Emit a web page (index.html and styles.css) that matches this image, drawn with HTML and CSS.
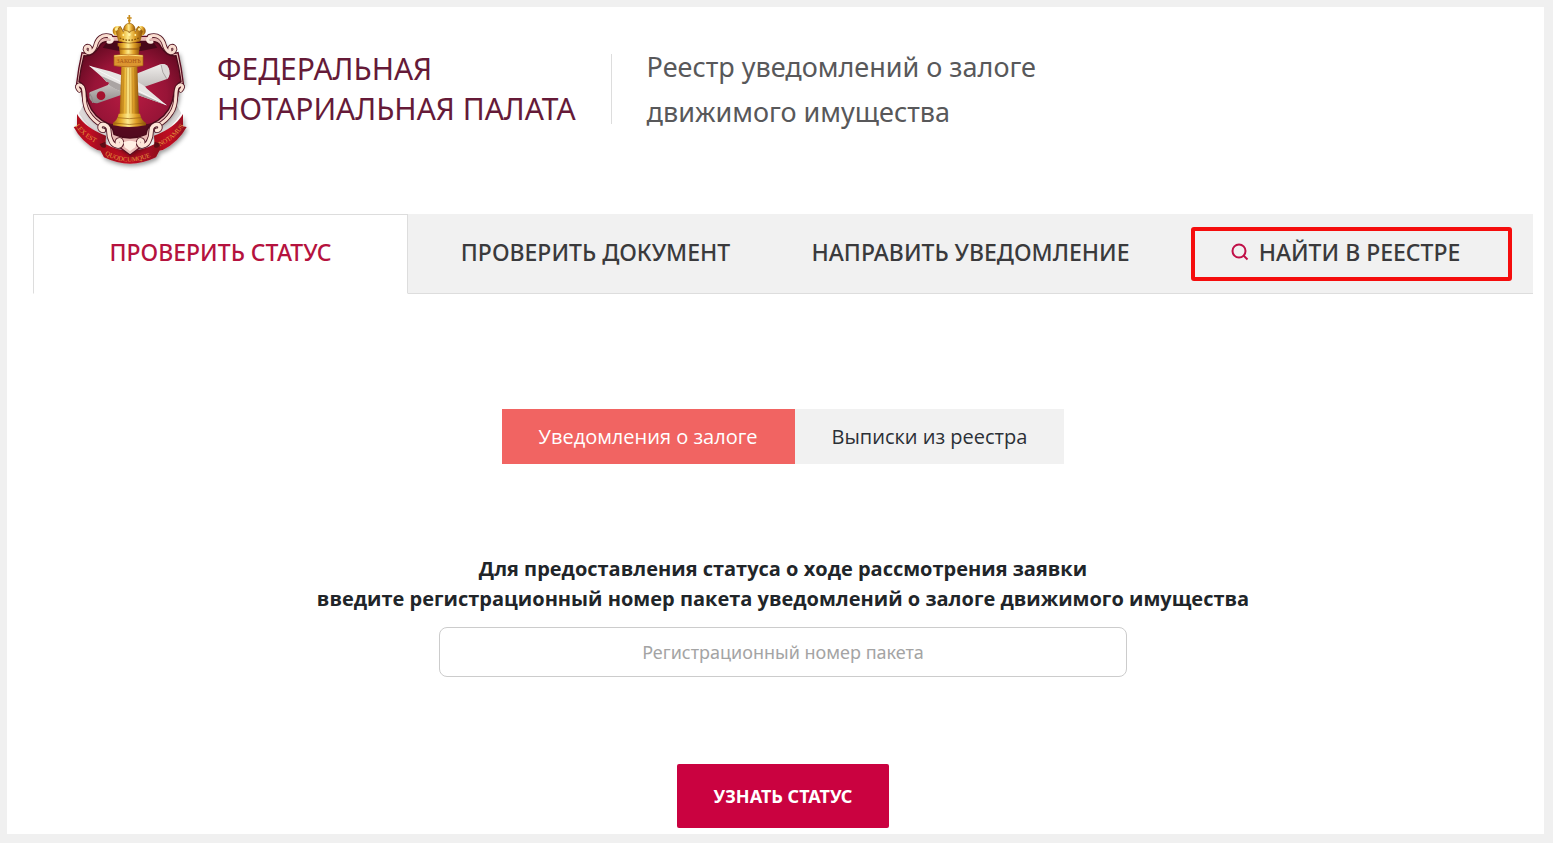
FILE: index.html
```html
<!DOCTYPE html>
<html lang="ru">
  <head>
    <meta charset="UTF-8" />
    <meta name="viewport" content="width=device-width, initial-scale=1.0" />
    <title>Реестр уведомлений о залоге движимого имущества</title>
    <link rel="stylesheet" href="styles.css">
  </head>
  <body>
    <div class="page">
      <header class="header">
        <svg class="emblem" viewBox="30 21 360 480" aria-hidden="true">
          <defs>
            <linearGradient id="gold" x1="0" x2="1" y1="0" y2="0">
              <stop offset="0" stop-color="#a8660c" />
              <stop offset="0.25" stop-color="#e9b233" />
              <stop offset="0.45" stop-color="#fdea8c" />
              <stop offset="0.7" stop-color="#e0a028" />
              <stop offset="1" stop-color="#8a4f08" />
            </linearGradient>
            <radialGradient id="shield" cx="0.5" cy="0.55" r="0.6">
              <stop offset="0" stop-color="#b81b42" />
              <stop offset="0.6" stop-color="#981437" />
              <stop offset="1" stop-color="#650a22" />
            </radialGradient>
            <linearGradient id="ribbon" x1="0" x2="1" y1="0" y2="0">
              <stop offset="0" stop-color="#a80c1a" />
              <stop offset="0.5" stop-color="#c01024" />
              <stop offset="1" stop-color="#8e101e" />
            </linearGradient>
            <linearGradient id="paper" x1="0" x2="0" y1="0" y2="1">
              <stop offset="0" stop-color="#f0eeec" />
              <stop offset="0.5" stop-color="#c8c4c2" />
              <stop offset="1" stop-color="#8f8a8a" />
            </linearGradient>
            <filter id="shadow" x="-10%" y="-10%" width="125%" height="125%">
              <feDropShadow dx="4" dy="7" stdDeviation="6" flood-color="#000" flood-opacity="0.4" />
            </filter>
            <path id="motto-left" d="M46 362 Q68 398 120 420" />
            <path id="motto-mid" d="M134 449 Q210 492 290 446" />
            <path id="motto-right" d="M299 424 Q350 402 378 352" />
          </defs>

          <!-- ribbon -->
          <path d="M56 325 Q90 378 138 402 Q210 450 282 402 Q330 378 364 325 L350 300 H70 Z" fill="#dedada" />
          <g filter="url(#shadow)">
            <path d="M51 327 Q75 369 138 392 L136 426 Q130 440 112 435 Q65 412 41 366 L51 364 Z" fill="url(#ribbon)" />
            <path d="M369 327 Q345 369 282 392 L284 426 Q290 440 308 435 Q355 412 380 366 L369 364 Z" fill="url(#ribbon)" />
            <path d="M119 417 Q124 407 136 417 Q210 457 284 417 Q296 407 301 417 L299 436 L288 457 Q210 495 132 457 L121 436 Z" fill="url(#ribbon)" />
            <path d="M119 417 Q126 434 138 426 L136 410 Z M301 417 Q294 434 282 426 L284 410 Z" fill="#5d0713" />
          </g>
          <g class="motto">
            <text><textPath href="#motto-left">LEX EST</textPath></text>
            <text><textPath href="#motto-mid">QUODCUMQUE</textPath></text>
            <text><textPath href="#motto-right">NOTAMUS</textPath></text>
          </g>

          <!-- shield -->
          <g filter="url(#shadow)">
            <path d="M150 94 Q112 91 104 124 Q88 150 66 143 Q55 190 50 236 Q66 240 66 266 Q72 325 121 357 Q146 365 148 388 L166 417 L210 450 L254 417 L272 388 Q274 365 299 357 Q348 325 354 266 Q354 240 370 236 Q365 190 354 143 Q332 150 316 124 Q308 91 270 94 Z" fill="#e8b9b4" stroke="#5b0f20" stroke-width="4" />
          </g>
          <path d="M150 109 Q124 108 118 124 Q99 156 72 152 Q62 190 57 230 Q76 240 78 266 Q86 320 126 346 Q160 360 162 388 Q210 410 258 388 Q260 360 294 346 Q334 320 342 266 Q344 240 363 230 Q358 190 348 152 Q321 156 302 124 Q296 108 270 109 Z" fill="url(#shield)" stroke="#4a0a1a" stroke-width="4" />
          <path d="M140 112 H280 L292 128 Q210 150 128 128 Z" fill="#3d0716" opacity="0.8" />
          <path d="M134 351 Q210 374 286 351 Q262 370 256 388 Q210 407 164 388 Q157 368 134 351 Z" fill="#45091a" opacity="0.8" />
          <!-- scroll frame curls -->
          <g fill="none" stroke-linecap="round" stroke-linejoin="round">
            <g id="curls">
              <path d="M152 94 C126 86 111 101 106 124 C99 144 80 150 75 133 C76 118 95 122 90 136" stroke="#4f1220" stroke-width="14" />
              <path d="M152 94 C126 86 111 101 106 124 C99 144 80 150 75 133 C76 118 95 122 90 136" stroke="#f9ddd0" stroke-width="9" />
              <path d="M144 111 C160 114 162 97 148 97" stroke="#fbe9dd" stroke-width="9" />
              <path d="M58 256 C44 242 58 234 68 246 C78 264 65 295 86 324 C98 343 111 353 124 360" stroke="#4f1220" stroke-width="14" />
              <path d="M58 256 C44 242 58 234 68 246 C78 264 65 295 86 324 C98 343 111 353 124 360" stroke="#f9ddd0" stroke-width="9" />
              <path d="M130 376 C116 377 116 354 134 359 C154 367 142 384 151 402 C158 427 188 430 184 410 C181 399 168 407 173 414" stroke="#4f1220" stroke-width="16" />
              <path d="M130 376 C116 377 116 354 134 359 C154 367 142 384 151 402 C158 427 188 430 184 410 C181 399 168 407 173 414" stroke="#fde6d8" stroke-width="11" />
            </g>
            <use href="#curls" transform="translate(420 0) scale(-1 1)" />
          </g>
          <path d="M190 412 Q210 402 230 412 L226 427 L210 438 L194 427 Z" fill="#fff0e5" />

          <!-- crossed scroll and quill -->
          <path d="M89 262 L301 178 Q320 174 327 194 Q331 213 321 222 L112 295 Q94 296 88 278 Z" fill="url(#paper)" />
          <path d="M303 178 Q322 172 328 196 Q331 213 322 222 Q310 200 303 178 Z" fill="#dedad8" />
          <path d="M303 179 Q306 204 320 221" fill="none" stroke="#8d8685" stroke-width="2" />
          <path d="M88 264 Q98 276 98 294" fill="none" stroke="#8d8685" stroke-width="3" />
          <circle cx="123" cy="272" r="13" fill="#a5122f" />
          <path d="M87 182 L150 199 Q245 230 261 251 L320 301 L231 269 Q180 265 152 244 L144 238 L151 233 L139 230 L126 216 Z" fill="#e7e4e2" />
          <path d="M126 214 L320 301 L231 269 Q180 265 152 244 L144 238 L151 233 L139 230 Z" fill="#aaa4a3" />
          <path d="M89 183 L319 300" stroke="#fff" stroke-width="2" />

          <!-- column -->
          <path d="M176 116 H240 L236 150 H180 Z" fill="url(#gold)" />
          <path d="M173 114 H243 V124 Q208 134 173 124 Z" fill="url(#gold)" />
          <path d="M177 132 H239" stroke="#8b510c" stroke-width="3" />
          <path d="M184 184 H232 L237 331 H179 Z" fill="url(#gold)" />
          <path d="M192 188 L189 326 M200 188 L198 326 M208 188 V326 M216 188 L218 326 M224 188 L228 326" stroke="#a66d13" stroke-width="2" opacity="0.6" />
          <path d="M176 326 H240 L243 337 Q245 345 258 354 V361 Q208 371 159 361 V354 Q171 345 173 337 Z" fill="url(#gold)" />
          <path d="M173 338 Q208 344 243 338 M161 354 Q208 363 256 354" fill="none" stroke="#925910" stroke-width="2" />
          <path d="M162 151 Q206 145 249 151 V182 Q206 190 162 182 Z" fill="#dc9530" stroke="#a15e14" stroke-width="2" />
          <path d="M163 153 Q206 147 248 153" fill="none" stroke="#ffe07a" stroke-width="3" />
          <text class="column-label" x="206" y="174">ЗАКОНЪ</text>

          <!-- crown -->
          <circle cx="173" cy="78" r="15" fill="url(#gold)" />
          <circle cx="242" cy="78" r="15" fill="url(#gold)" />
          <path d="M168 79 L181 64 L190 82 L195 64 L208 84 L221 64 L226 82 L235 64 L248 79 L240 108 Q208 121 176 108 Z" fill="url(#gold)" stroke="#97600f" stroke-width="2" />
          <path d="M190 74 Q194 55 208 55 Q222 55 226 74 L208 80 Z" fill="url(#gold)" stroke="#97600f" stroke-width="2" />
          <path d="M179 99 Q208 112 237 99" fill="none" stroke="#80510a" stroke-width="4" stroke-dasharray="5 4" />
          <path d="M208 30 V58 M201 39 H215 M204 47 H212" stroke="#c88b1c" stroke-width="5" />
          <g fill="#fff3a6">
            <circle cx="169" cy="73" r="4" />
            <circle cx="238" cy="73" r="4" />
            <circle cx="208" cy="89" r="4" />
            <circle cx="190" cy="90" r="3" />
            <circle cx="226" cy="90" r="3" />
          </g>
        </svg>
        <div class="heading">
          <div class="chamber">ФЕДЕРАЛЬНАЯ<br />НОТАРИАЛЬНАЯ ПАЛАТА</div>
          <h1 class="title">Реестр уведомлений о залоге<br />движимого имущества</h1>
        </div>
      </header>

      <main class="main">
        <nav class="tabs">
          <a class="tab tab-active" href="#">ПРОВЕРИТЬ СТАТУС</a>
          <a class="tab" href="#">ПРОВЕРИТЬ ДОКУМЕНТ</a>
          <a class="tab" href="#">НАПРАВИТЬ УВЕДОМЛЕНИЕ</a>
          <a class="tab tab-search" href="#">
            <svg class="search-icon" viewBox="0 0 18 18" aria-hidden="true">
              <circle cx="8" cy="8" r="6.5" />
              <path d="M12.5 12.5 L16.5 16.5" />
            </svg>
            НАЙТИ В РЕЕСТРЕ
          </a>
        </nav>

        <div class="switch">
          <button class="switch-item switch-active" type="button">Уведомления о залоге</button>
          <button class="switch-item" type="button">Выписки из реестра</button>
        </div>

        <form class="status-form">
          <label class="status-label" for="package">Для предоставления статуса о ходе рассмотрения заявки<br />введите регистрационный номер пакета уведомлений о залоге движимого имущества</label>
          <input class="status-input" id="package" type="text" placeholder="Регистрационный номер пакета" />
          <button class="submit" type="submit">УЗНАТЬ СТАТУС</button>
        </form>
      </main>
    </div>
  </body>
</html>
```

FILE: styles.css
```css
* {
  box-sizing: border-box;
}

body {
  margin: 0;
  padding: 7px 9px 9px 7px;
  background-color: #f0f0f0;
  font-family: "Noto Sans", "Open Sans", sans-serif;
  color: #212529;
}

.page {
  background-color: #fff;
  padding: 0 11px 6px 26px;
}

.header {
  display: flex;
  align-items: center;
  padding: 5px 0 42px 37px;
}

.emblem {
  width: 120px;
  height: 160px;
  flex-shrink: 0;
}

.motto {
  fill: #e59a3c;
  font-family: "Liberation Serif", serif;
  font-size: 20px;
}

.column-label {
  fill: #a65312;
  font-family: "Liberation Serif", serif;
  font-size: 18px;
  text-anchor: middle;
}

.heading {
  display: flex;
  align-items: center;
  margin-left: 27px;
  padding-bottom: 6px;
}

.chamber {
  font-size: 30px;
  line-height: 40px;
  color: #651a38;
}

.title {
  position: relative;
  margin: 0;
  padding-left: 71px;
  font-size: 27px;
  font-weight: 400;
  line-height: 45px;
  color: #58585a;
}

/* thin line between the chamber name and the title */
.title::before {
  content: "";
  position: absolute;
  top: 10px;
  bottom: 10px;
  left: 35px;
  border-left: 1px solid #ddd;
}

.main {
  display: flex;
  flex-direction: column;
  align-items: center;
}

.tabs {
  display: flex;
  align-self: stretch;
  background-color: #f1f1f1;
}

.tab {
  position: relative;
  flex: 1 1 25%;
  display: flex;
  justify-content: center;
  align-items: center;
  gap: 10px;
  height: 80px;
  padding-bottom: 4px;
  border-bottom: 1px solid #ddd;
  font-size: 23px;
  font-weight: 500;
  color: #3a3a3c;
  text-decoration: none;
}

.tab-active {
  background-color: #fff;
  border: 1px solid #ddd;
  border-bottom-color: #fff;
  color: #b5123e;
}

/* red frame around the search tab */
.tab-search::after {
  content: "";
  position: absolute;
  top: 13px;
  bottom: 12px;
  left: 33px;
  right: 21px;
  border: 4px solid #f50d0d;
  border-radius: 3px;
}

.search-icon {
  width: 18px;
  height: 18px;
  fill: none;
  stroke: #c01048;
  stroke-width: 2;
}

.switch {
  display: flex;
  margin-top: 115px;
}

.switch-item {
  height: 55px;
  padding: 0 37px;
  border: none;
  background-color: #f1f1f1;
  font-family: "Open Sans", "Noto Sans", sans-serif;
  font-size: 20px;
  color: #2b3036;
  cursor: pointer;
}

.switch-active {
  background-color: #f16462;
  color: #fff;
}

.status-form {
  display: flex;
  flex-direction: column;
  align-items: center;
  width: 100%;
  margin-top: 90px;
}

.status-label {
  font-family: "Open Sans", "Noto Sans", sans-serif;
  font-size: 20px;
  font-weight: 700;
  line-height: 30px;
  text-align: center;
}

.status-input {
  width: 100%;
  max-width: 688px;
  height: 50px;
  margin-top: 13px;
  border: 1px solid #ccc;
  border-radius: 8px;
  font-family: inherit;
  font-size: 18px;
  text-align: center;
}

.status-input::placeholder {
  color: #a4a4a4;
}

.submit {
  height: 64px;
  margin-top: 87px;
  padding: 0 37px;
  border: none;
  border-radius: 2px;
  background-color: #ca0240;
  font-family: inherit;
  font-size: 18px;
  font-weight: 700;
  color: #fff;
  cursor: pointer;
}
```
